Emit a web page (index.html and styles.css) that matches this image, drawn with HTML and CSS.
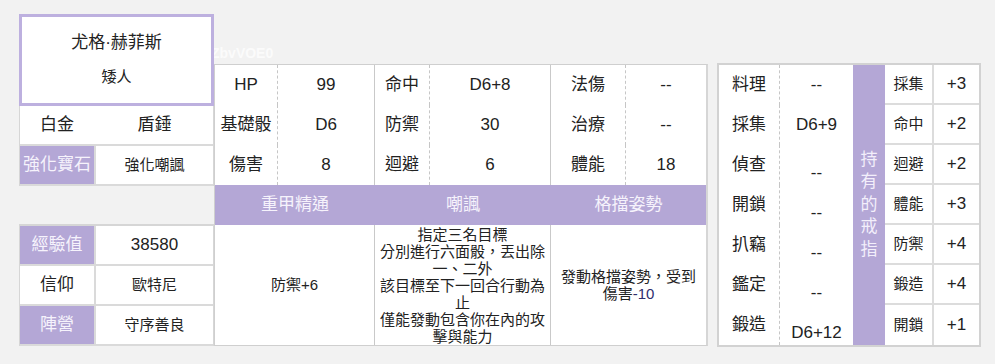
FILE: index.html
```html
<!DOCTYPE html>
<html lang="zh-Hant">
<head>
<meta charset="utf-8">
<title>角色卡</title>
<link rel="stylesheet" href="styles.css">
</head>
<body>
<div class="sheet">
  <div class="left">
    <div class="namebox">
      <div class="name">尤格·赫菲斯</div>
      <div class="race">矮人</div>
    </div>
    <div class="ltable">
      <div class="lrow plain"><span class="c">白金</span><span class="c">盾錘</span></div>
      <div class="lrow"><span class="c tag">強化寶石</span><span class="c val sm">強化嘲諷</span></div>
    </div>
    <div class="ltable lower">
      <div class="lrow"><span class="c tag">經驗值</span><span class="c val">38580</span></div>
      <div class="lrow"><span class="c">信仰</span><span class="c val sm">歐特尼</span></div>
      <div class="lrow"><span class="c tag">陣營</span><span class="c val sm">守序善良</span></div>
    </div>
  </div>

  <div class="mid">
    <span class="ghost">ZbvVOE0</span>
    <div class="stats">
      <div class="c lab">HP</div><div class="c v sep">99</div>
      <div class="c lab">命中</div><div class="c v sep">D6+8</div>
      <div class="c lab">法傷</div><div class="c v">--</div>

      <div class="c lab">基礎骰</div><div class="c v sep">D6</div>
      <div class="c lab">防禦</div><div class="c v sep">30</div>
      <div class="c lab">治療</div><div class="c v">--</div>

      <div class="c lab">傷害</div><div class="c v sep">8</div>
      <div class="c lab">迴避</div><div class="c v sep">6</div>
      <div class="c lab">體能</div><div class="c v">18</div>

      <div class="c head">重甲精通</div>
      <div class="c head">嘲諷</div>
      <div class="c head">格擋姿勢</div>

      <div class="c body sep sm">防禦+6</div>
      <div class="c body sep desc"><div class="txt">指定三名目標<br>分別進行六面骰，丟出除<br>一、二外<br>該目標至下一回合行動為<br>止<br>僅能發動包含你在內的攻<br>擊與能力</div></div>
      <div class="c body desc"><div class="txt">發動格擋姿勢，受到<br>傷害<span class="neg">-10</span></div></div>
    </div>
  </div>

  <div class="right">
    <div class="rings-title"><span class="vert">持有的戒指</span></div>

    <div class="c rlab">料理</div><div class="c rval">--</div><div class="c rk">採集</div><div class="c rn">+3</div>
    <div class="c rlab">採集</div><div class="c rval">D6+9</div><div class="c rk">命中</div><div class="c rn">+2</div>
    <div class="c rlab">偵查</div><div class="c rval low">--</div><div class="c rk">迴避</div><div class="c rn">+2</div>
    <div class="c rlab">開鎖</div><div class="c rval low">--</div><div class="c rk">體能</div><div class="c rn">+3</div>
    <div class="c rlab">扒竊</div><div class="c rval low">--</div><div class="c rk">防禦</div><div class="c rn">+4</div>
    <div class="c rlab">鑑定</div><div class="c rval low">--</div><div class="c rk">鍛造</div><div class="c rn">+4</div>
    <div class="c rlab">鍛造</div><div class="c rval low">D6+12</div><div class="c rk last">開鎖</div><div class="c rn last">+1</div>
  </div>
</div>
</body>
</html>
```

FILE: styles.css
```css
* { box-sizing: border-box; }

html, body {
  margin: 0;
  background: #f2f2f2;
}

body {
  font-family: "Liberation Sans", "Noto Sans CJK TC", sans-serif;
  font-size: 17px;
  color: #222;
}

.sheet {
  display: flex;
  align-items: flex-start;
  padding: 14px 0 0 19px;
}

.c {
  display: flex;
  align-items: center;
  justify-content: center;
  text-align: center;
  line-height: 20px;
}

.sm { font-size: 15px; }

/* ---------- left column ---------- */
.left {
  width: 195px;
  flex: none;
}

.namebox {
  position: relative;
  z-index: 1;
  height: 92px;
  background: #fff;
  border: 3px solid #bdb0df;
  display: flex;
  flex-direction: column;
  align-items: center;
  justify-content: center;
  gap: 15px;
  padding-bottom: 2px;
}

.name { font-size: 17px; line-height: 20px; }
.race { font-size: 15px; line-height: 18px; }

.ltable {
  background: #fff;
  border-left: 1px solid #d6d6d6;
  border-right: 1px solid #d6d6d6;
}

.ltable.lower {
  margin-top: 38px;
  border-top: 2px solid #d6d6d6;
}

.lrow {
  display: grid;
  grid-template-columns: 74px 1fr;
  height: 40px;
  border-bottom: 2px solid #dadada;
}

.tag {
  background: #b4a7d6;
  color: #f6f3fc;
}

.val { border-left: 2px solid #dadada; }
.plain .c:last-child { padding-left: 2px; }

/* ---------- middle stats ---------- */
.mid {
  position: relative;
  width: 494px;
  flex: none;
  margin-top: 50px;
}

.ghost {
  position: absolute;
  left: -3px;
  top: -19px;
  font-size: 14px;
  font-weight: bold;
  line-height: 16px;
  color: #fbfbfb;
}

.stats {
  display: grid;
  grid-template-columns: 63px 97px 55px 121px 75px 80px;
  grid-template-rows: 40px 40px 40px 40px 120px;
  background: #fff;
  border-top: 1px solid #cfcfcf;
  border-left: 1px solid #cfcfcf;
  border-right: 2px solid #d6d6d6;
  border-bottom: 1px solid #cfcfcf;
}

.lab { border-right: 1px dashed #c6c6c6; }
.sep { border-right: 1px solid #c9c9c9; }

.head {
  grid-column: span 2;
  background: #b4a7d6;
  color: #f6f3fc;
  border: none;
}

.body {
  grid-column: span 2;
}

.desc {
  font-size: 15px;
  line-height: 17px;
  padding: 0 2px;
  overflow: visible;
}

.desc .txt {
  white-space: nowrap;
}

.neg { color: #2e2e6e; }

/* ---------- right block ---------- */
.right {
  flex: none;
  width: 264px;
  margin-left: 9px;
  margin-top: 49px;
  display: grid;
  grid-template-columns: 61px 73px 32px 49px 45px;
  grid-template-rows: repeat(7, 40px);
  background: #fff;
  border: 2px solid #d2d2d2;
}

.rings-title {
  grid-column: 3;
  grid-row: 1 / span 7;
  background: #b4a7d6;
  color: #f3effb;
  display: flex;
  align-items: center;
  justify-content: center;
}

.vert {
  width: 1em;
  font-size: 17px;
  line-height: 22.5px;
  text-align: center;
}

.rlab { border-right: 1px dashed #c6c6c6; }

.rval.low {
  align-items: flex-end;
  padding-bottom: 2px;
}

.rk {
  font-size: 15px;
  border-right: 2px solid #dcdcdc;
  border-bottom: 2px solid #dcdcdc;
}

.rn {
  border-bottom: 2px solid #dcdcdc;
}

.rk.last, .rn.last { border-bottom: none; }
```
